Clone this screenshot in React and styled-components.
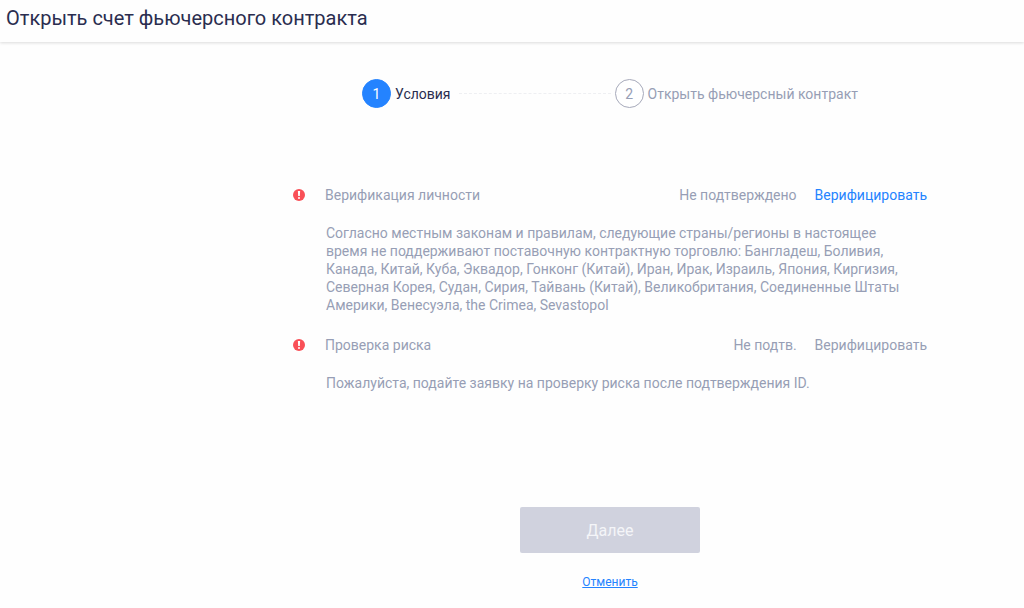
import styled, { createGlobalStyle } from 'styled-components';

const steps = [
  { id: 1, label: 'Условия', active: true },
  { id: 2, label: 'Открыть фьючерсный контракт', active: false },
];

const checks = [
  {
    id: 'identity',
    title: 'Верификация личности',
    status: 'Не подтверждено',
    enabled: true,
    text: 'Согласно местным законам и правилам, следующие страны/регионы в настоящее время не поддерживают поставочную контрактную торговлю: Бангладеш, Боливия, Канада, Китай, Куба, Эквадор, Гонконг (Китай), Иран, Ирак, Израиль, Япония, Киргизия, Северная Корея, Судан, Сирия, Тайвань (Китай), Великобритания, Соединенные Штаты Америки, Венесуэла, the Crimea, Sevastopol',
  },
  {
    id: 'risk',
    title: 'Проверка риска',
    status: 'Не подтв.',
    enabled: false,
    text: 'Пожалуйста, подайте заявку на проверку риска после подтверждения ID.',
  },
];

function WarningIcon() {
  return (
    <WarningIconUI viewBox="0 0 12 12" aria-hidden="true">
      <circle cx="6" cy="6" r="6" fill="#f95057" />
      <path d="M4.9 2h2.2l-.3 5H5.2z" fill="#fff" />
      <circle cx="6" cy="8.9" r="1" fill="#fff" />
    </WarningIconUI>
  );
}

function Check({ check }) {
  return (
    <CheckUI>
      <WarningIcon />
      <CheckTitleUI>{check.title}</CheckTitleUI>
      <StatusUI>{check.status}</StatusUI>
      <VerifyUI type="button" disabled={!check.enabled}>
        Верифицировать
      </VerifyUI>
      <DescriptionUI>{check.text}</DescriptionUI>
    </CheckUI>
  );
}

function App() {
  return (
    <>
      <GlobalStyle />
      <HeaderUI>
        <TitleUI>Открыть счет фьючерсного контракта</TitleUI>
      </HeaderUI>

      <MainUI>
        <StepsUI>
          {steps.map(step => (
            <StepUI key={step.id} $active={step.active}>
              <StepNumberUI $active={step.active}>{step.id}</StepNumberUI>
              {step.label}
            </StepUI>
          ))}
        </StepsUI>

        <ChecksUI>
          {checks.map(check => (
            <Check key={check.id} check={check} />
          ))}
        </ChecksUI>

        <NextUI type="button" disabled>
          Далее
        </NextUI>
        <CancelUI href="#cancel">Отменить</CancelUI>
      </MainUI>
    </>
  );
}

const GlobalStyle = createGlobalStyle`
  * {
    box-sizing: border-box;
  }

  body {
    margin: 0;
    background-color: #fefefe;
    color: #979eb5;
    font-family: Roboto, 'Liberation Sans', sans-serif;
    font-size: 14px;
    line-height: 18px;
  }

  button {
    border: 0;
    padding: 0;
    font-family: inherit;
  }
`;

const HeaderUI = styled.header`
  padding: 6px 6px 12px;
  box-shadow: 0 1px 3px rgba(0, 0, 0, 0.14);
`;

const TitleUI = styled.h1`
  margin: 0;
  color: #2a2d4f;
  font-size: 20px;
  font-weight: 400;
  line-height: 24px;
`;

const MainUI = styled.main`
  display: flex;
  flex-direction: column;
  align-items: center;
  padding: 37px 0 16px 196px;
`;

const StepsUI = styled.ol`
  display: flex;
  margin: 0;
  padding: 0;
  list-style: none;
`;

const StepUI = styled.li`
  display: flex;
  align-items: center;
  gap: 4px;
  color: ${props => (props.$active ? '#2a2d4f' : '#979eb5')};

  &:not(:last-child)::after {
    content: '';
    width: 152px;
    margin: 0 4px;
    border-top: 1px dashed #eeeff2;
  }
`;

const StepNumberUI = styled.span`
  display: flex;
  align-items: center;
  justify-content: center;
  width: 29px;
  height: 29px;
  border: 1px solid ${props => (props.$active ? '#2483ff' : '#a6a9ba')};
  border-radius: 50%;
  background-color: ${props => (props.$active ? '#2483ff' : '#fff')};
  color: ${props => (props.$active ? '#fff' : '#979eb5')};
`;

const ChecksUI = styled.section`
  display: flex;
  flex-direction: column;
  gap: 22px;
  width: 100%;
  max-width: 634px;
  margin-top: 78px;
`;

const CheckUI = styled.article`
  display: grid;
  grid-template-columns: 12px 1fr auto auto;
  align-items: center;
  row-gap: 20px;
`;

const WarningIconUI = styled.svg`
  width: 12px;
  height: 12px;
`;

const CheckTitleUI = styled.h2`
  margin: 0 0 0 20px;
  font-size: 14px;
  font-weight: 400;
  line-height: 18px;
`;

const StatusUI = styled.span`
  margin-right: 18px;
`;

const VerifyUI = styled.button`
  background: none;
  color: #2483ff;
  font-size: 14px;
  line-height: 18px;
  cursor: pointer;

  &:disabled {
    color: #979eb5;
    cursor: default;
  }
`;

const DescriptionUI = styled.p`
  grid-column: 2 / -1;
  max-width: 600px;
  margin: 0 0 0 21px;
  padding-right: 20px;
`;

const NextUI = styled.button`
  width: 180px;
  height: 46px;
  margin-top: 115px;
  border-radius: 2px;
  background-color: #d0d2de;
  color: #f4f5f8;
  font-size: 16px;
`;

const CancelUI = styled.a`
  margin-top: 20px;
  color: #2483ff;
  font-size: 12px;
`;

export default App;
